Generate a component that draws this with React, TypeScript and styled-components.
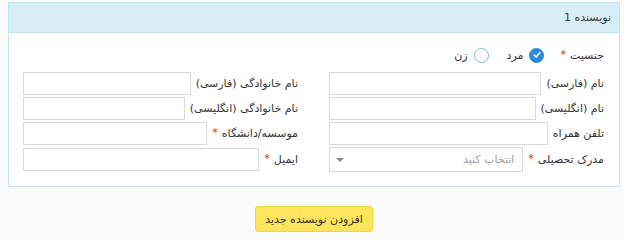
import React from 'react';
import styled, { createGlobalStyle } from 'styled-components';

const GlobalStyle = createGlobalStyle`
  html, body {
    margin: 0;
    padding: 0;
    background: #fbfbfb;
  }
  body {
    font-family: "DejaVu Sans", "Noto Sans", sans-serif;
    font-size: 11px;
    color: #333;
  }
`;

const Page = styled.div`
  direction: rtl;
  padding: 2px 4px 0 8px;
`;

const Panel = styled.section`
  border: 1px solid #bce8f1;
  background: #fff;
`;

const PanelHeader = styled.header`
  height: 29px;
  line-height: 29px;
  padding: 0 8px;
  background: #d9edf7;
  border-bottom: 1px solid #bce8f1;
  color: #3a3a3a;
  font-size: 11px;
`;

const PanelBody = styled.div`
  padding: 12px 15px 14px 14px;
`;

const GenderRow = styled.div`
  display: flex;
  align-items: center;
  height: 20px;
  margin-bottom: 7px;
`;

const Label = styled.label`
  white-space: nowrap;
  color: #333;
  font-size: 11px;
`;

const Required = styled.span`
  color: #e02020;
  font-size: 11px;
  margin-right: 4px;
  vertical-align: top;
  position: relative;
  top: -1px;
`;

const RadioGroup = styled.div`
  display: flex;
  align-items: center;
  gap: 18px;
  margin-right: 16px;
`;

const RadioOption = styled.span`
  display: flex;
  align-items: center;
  gap: 6px;
  font-size: 11px;
`;

const RadioMark = styled.span<{ $checked?: boolean }>`
  width: 15px;
  height: 15px;
  border-radius: 50%;
  box-sizing: border-box;
  display: inline-flex;
  align-items: center;
  justify-content: center;
  background: ${({ $checked }) => ($checked ? '#2d8ad9' : '#fff')};
  border: 1px solid ${({ $checked }) => ($checked ? '#2d8ad9' : '#7db7e6')};
`;

const FieldGrid = styled.div`
  display: grid;
  grid-template-columns: 1fr 1fr;
  column-gap: 31px;
  row-gap: 2px;
`;

const Field = styled.div`
  display: flex;
  align-items: center;
  gap: 5px;
`;

const TextInput = styled.input`
  flex: 1;
  min-width: 0;
  height: 23px;
  box-sizing: border-box;
  border: 1px solid #d6d9de;
  background: #fff;
  padding: 0 6px;
  font-family: inherit;
  font-size: 11px;
  outline: none;
`;

const SelectBox = styled.div`
  flex: 1;
  height: 25px;
  box-sizing: border-box;
  border: 1px solid #d6d9de;
  background: #fff;
  display: flex;
  align-items: center;
  justify-content: space-between;
  padding: 0 8px 0 6px;
  color: #a0a0a0;
  font-size: 11px;
`;

const Caret = styled.span`
  width: 0;
  height: 0;
  border-left: 4px solid transparent;
  border-right: 4px solid transparent;
  border-top: 4px solid #8a8a8a;
`;

const Footer = styled.div`
  display: flex;
  justify-content: center;
  padding-top: 19px;
`;

const AddButton = styled.button`
  height: 26px;
  padding: 0 9px;
  background: #ffe55e;
  border: 1px solid #f2d64a;
  border-radius: 3px;
  color: #333;
  font-family: inherit;
  font-size: 11px;
  cursor: pointer;
`;

const CheckIcon = () => (
  <svg width="8" height="8" viewBox="0 0 8 8">
    <path d="M1.2 4.2 L3.2 6 L6.8 1.8" fill="none" stroke="#fff" strokeWidth="1.6" strokeLinecap="round" strokeLinejoin="round" />
  </svg>
);

type FieldDef = { label: string; required?: boolean; select?: boolean };

const fields: FieldDef[] = [
  { label: 'نام (فارسی)' },
  { label: 'نام خانوادگی (فارسی)' },
  { label: 'نام (انگلیسی)' },
  { label: 'نام خانوادگی (انگلیسی)' },
  { label: 'تلفن همراه' },
  { label: 'موسسه/دانشگاه', required: true },
  { label: 'مدرک تحصیلی', required: true, select: true },
  { label: 'ایمیل', required: true },
];

const App: React.FC = () => (
  <>
    <GlobalStyle />
    <Page>
      <Panel>
        <PanelHeader>نویسنده 1</PanelHeader>
        <PanelBody>
          <GenderRow>
            <Label>
              جنسیت<Required>*</Required>
            </Label>
            <RadioGroup>
              <RadioOption>
                <RadioMark $checked>
                  <CheckIcon />
                </RadioMark>
                مرد
              </RadioOption>
              <RadioOption>
                <RadioMark />
                زن
              </RadioOption>
            </RadioGroup>
          </GenderRow>
          <FieldGrid>
            {fields.map((f) => (
              <Field key={f.label}>
                <Label>
                  {f.label}
                  {f.required && <Required>*</Required>}
                </Label>
                {f.select ? (
                  <SelectBox>
                    <span>انتخاب کنید</span>
                    <Caret />
                  </SelectBox>
                ) : (
                  <TextInput type="text" />
                )}
              </Field>
            ))}
          </FieldGrid>
        </PanelBody>
      </Panel>
      <Footer>
        <AddButton>افزودن نویسنده جدید</AddButton>
      </Footer>
    </Page>
  </>
);

export default App;
